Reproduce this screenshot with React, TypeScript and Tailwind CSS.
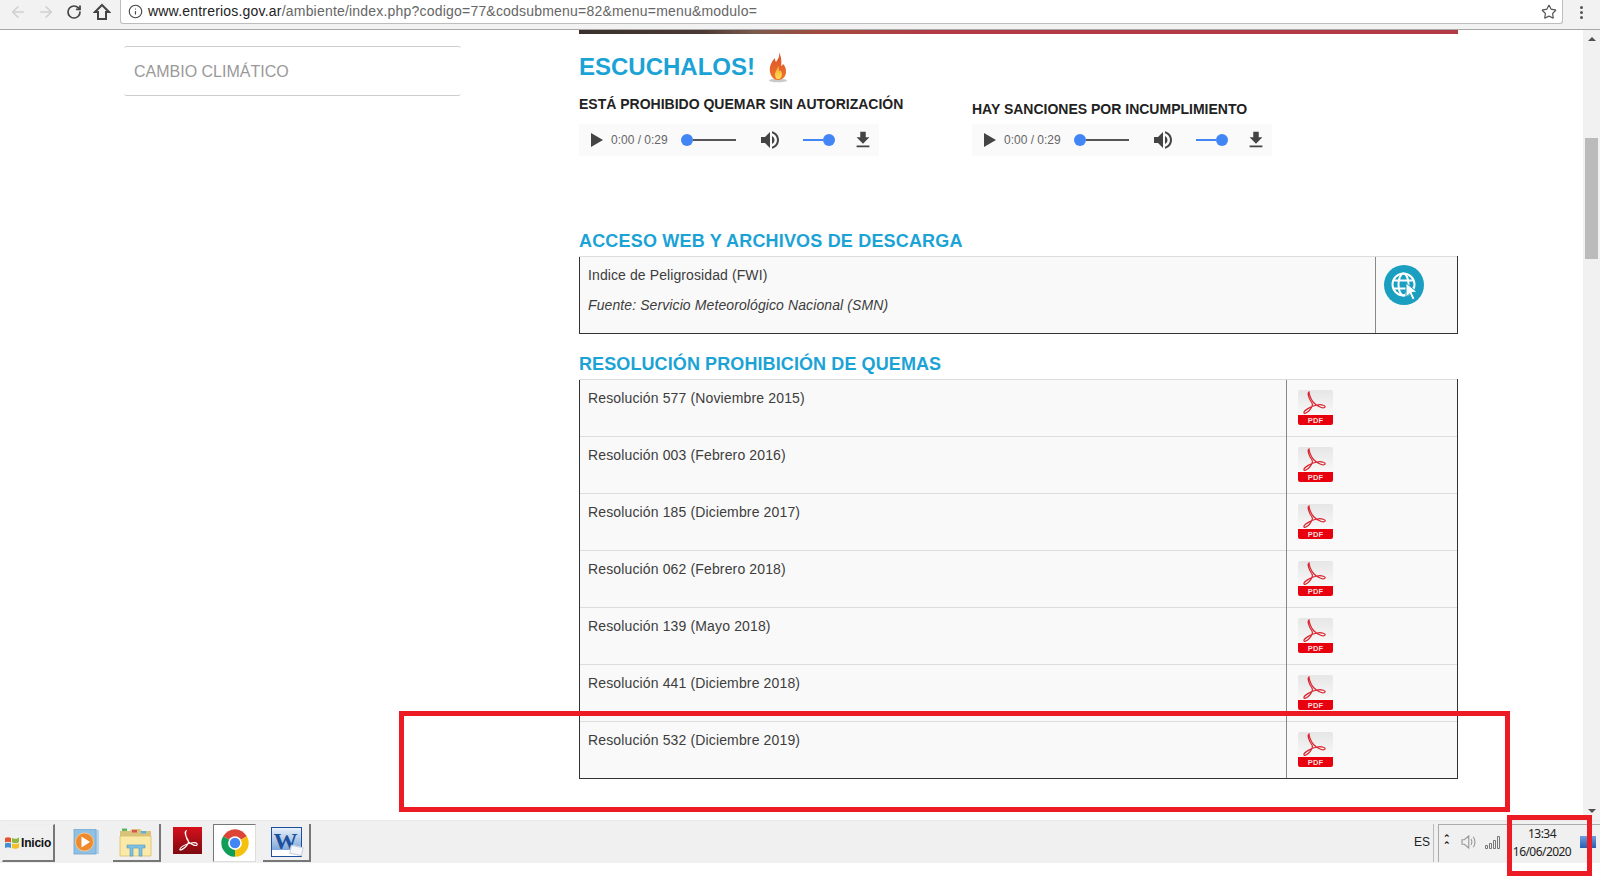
import { ArrowLeft, ArrowRight, RotateCw, Info, Star } from "lucide-react";

const sans = "font-['Liberation_Sans',Arial,sans-serif]";

const resoluciones = [
    "Resolución 577 (Noviembre 2015)",
    "Resolución 003 (Febrero 2016)",
    "Resolución 185 (Diciembre 2017)",
    "Resolución 062 (Febrero 2018)",
    "Resolución 139 (Mayo 2018)",
    "Resolución 441 (Diciembre 2018)",
    "Resolución 532 (Diciembre 2019)",
];

const PdfIcon = () => (
    <svg width="40" height="40" viewBox="0 0 40 40" className="block">
        <defs>
            <linearGradient id="pdfBg" x1="0" y1="0" x2="0" y2="1">
                <stop offset="0" stopColor="#e6e6e6"/>
                <stop offset="1" stopColor="#ffffff"/>
            </linearGradient>
        </defs>
        <rect x="3" y="2" width="35" height="35" rx="2" fill="url(#pdfBg)"/>
        <path d="M14 4c-2 1 0 7 3 11 2 4-6 12-8 10-1-2 7-7 13-8 5-1 9 1 8 2-1 2-7 0-11-4-3-3-5-9-5-11z"
              fill="none" stroke="#d9232e" strokeWidth="1.200"/>
        <path d="M3 27h35v8a2 2 0 0 1-2 2H5a2 2 0 0 1-2-2z" fill="#e8000f"/>
        <text x="20.500" y="34.800" textAnchor="middle" fontSize="7.500" fontWeight="700" fill="#f8dcdc"
              fontFamily="Liberation Sans, Arial, sans-serif">PDF</text>
    </svg>
);

const GlobeIcon = () => (
    <svg width="40" height="40" viewBox="0 0 40 40" className="block">
        <circle cx="20" cy="20" r="20" fill="#1a9fc0"/>
        <g fill="none" stroke="#ffffff" strokeWidth="2">
            <circle cx="19.500" cy="19.500" r="11"/>
            <ellipse cx="19.500" cy="19.500" rx="5" ry="11"/>
            <path d="M9.500 15.500h20M9.500 23.500h20"/>
        </g>
        <path d="M22 18l11 9-5 .6 3 6-2.600 1.200-2.800-6-3.600 3.400z" fill="#ffffff" stroke="#1a9fc0" strokeWidth="1"/>
    </svg>
);

const Flame = () => (
    <svg width="24" height="31" viewBox="0 0 24 31" className="block">
        <defs>
            <linearGradient id="flameOut" x1="0" y1="0" x2="0" y2="1">
                <stop offset="0" stopColor="#d9502a"/>
                <stop offset="1" stopColor="#f0742a"/>
            </linearGradient>
            <linearGradient id="flameIn" x1="0" y1="0" x2="0" y2="1">
                <stop offset="0" stopColor="#f7a428"/>
                <stop offset="1" stopColor="#fde25a"/>
            </linearGradient>
        </defs>
        <ellipse cx="12" cy="28.500" rx="9" ry="1.800" fill="#c9c9c9"/>
        <path d="M13 0c1 5-1 7-3 10-1-1-1-3-1-4-3 3-6 8-5 14 1 5 4 8 8 8s8-3 8-8c0-4-1-6-3-8-1 1-1 2-2 2 1-5 0-10-2-14z"
              fill="url(#flameOut)"/>
        <path d="M12 14c0 3-3 5-3 8 0 3 1 5 3 5s4-2 4-5c0-2-1-3-2-4 0 1-1 1-1 1 0-2 0-4-1-5z" fill="url(#flameIn)"/>
    </svg>
);

const AudioPlayer = () => (
    <div className={`flex h-[32px] w-[300px] items-center bg-[#fafafa] text-[#666] ${sans}`}>
        <svg width="24" height="24" viewBox="0 0 24 24" className="ml-[5px] fill-[#444]">
            <path d="M7 5v14l12-7z"/>
        </svg>
        <span className="ml-[3px] w-[58px] text-[12px] whitespace-nowrap">0:00 / 0:29</span>
        <div className="ml-[12px] flex w-[55px] items-center">
            <span className="h-[12px] w-[12px] rounded-full bg-[#4285f4]"/>
            <span className="h-[2px] flex-1 bg-[#555]"/>
        </div>
        <svg width="24" height="24" viewBox="0 0 24 24" className="ml-[22px] fill-[#444]">
            <path d="M3 9v6h4l5 5V4L7 9H3zm13.500 3c0-1.770-1.020-3.290-2.500-4.030v8.050c1.480-.73 2.500-2.250 2.500-4.020zM14 3.230v2.060c2.890.86 5 3.540 5 6.710s-2.110 5.850-5 6.710v2.060c4.010-.91 7-4.490 7-8.770s-2.990-7.860-7-8.770z"/>
        </svg>
        <div className="ml-[21px] flex w-[32px] items-center">
            <span className="h-[2px] flex-1 bg-[#4285f4]"/>
            <span className="h-[12px] w-[12px] rounded-full bg-[#4285f4]"/>
        </div>
        <svg width="22" height="22" viewBox="0 0 24 24" className="ml-[17px] fill-[#444]">
            <path d="M19 9h-4V3H9v6H5l7 7 7-7zM5 18v2h14v-2H5z"/>
        </svg>
    </div>
);

const ChromeLogo = () => (
    <svg width="30" height="30" viewBox="0 0 24 24">
        <path d="M12 12L2.500 6.500A11 11 0 0 1 21.500 6.500z" fill="#db4437"/>
        <path d="M12 12L21.500 6.500A11 11 0 0 1 12 23z" fill="#f4c20d"/>
        <path d="M12 12L12 23A11 11 0 0 1 2.500 6.500z" fill="#0f9d58"/>
        <circle cx="12" cy="12" r="5.500" fill="#ffffff"/>
        <circle cx="12" cy="12" r="4.200" fill="#4285f4"/>
    </svg>
);

const MediaPlayerLogo = () => (
    <svg width="30" height="28" viewBox="0 0 30 28">
        <rect x="5" y="1" width="21" height="24" fill="#b7d4ea"/>
        <rect x="1" y="0" width="22" height="25" fill="#8fc0e3" stroke="#6fa6cf" strokeWidth="0.8"/>
        <circle cx="11.500" cy="13" r="9" fill="#ee8a2c" stroke="#fbc68a" strokeWidth="1"/>
        <path d="M8.500 7.500v11l8.500-5.500z" fill="#ffffff"/>
    </svg>
);

const FolderLogo = () => (
    <svg width="34" height="34" viewBox="0 0 34 34">
        <path d="M1 6h10l2-2h8l2 2h9v24H1z" fill="#d9c27a"/>
        <rect x="3" y="3.500" width="5" height="2.500" fill="#5cb85c"/>
        <rect x="13" y="5" width="5" height="2.500" fill="#d9534f"/>
        <rect x="22" y="6" width="5" height="2.500" fill="#5bb0de"/>
        <path d="M1 11h31v20H1z" fill="#fbe9a8" stroke="#d8bd6c" strokeWidth="0.8"/>
        <path d="M11 31v-8h-3v-3h18v3h-3v8h-3v-8h-6v8z" fill="#7fc1e4" stroke="#4f94bd" strokeWidth="0.6"/>
    </svg>
);

const AcrobatLogo = () => (
    <svg width="29" height="27" viewBox="0 0 29 27">
        <defs>
            <linearGradient id="acro" x1="0" y1="0" x2="0" y2="1">
                <stop offset="0" stopColor="#d6101c"/>
                <stop offset="1" stopColor="#7e0a10"/>
            </linearGradient>
        </defs>
        <rect width="29" height="27" fill="url(#acro)"/>
        <path d="M13 4c-2 1 0 6 2 9 2 4-5 10-8 10-1-2 5-6 11-7 4-1 7 0 6 2-1 1-6 0-9-4-2-3-3-8-2-10z"
              fill="none" stroke="#ffffff" strokeWidth="1.100"/>
    </svg>
);

const WordLogo = () => (
    <div className="relative h-[30px] w-[31px] border border-[#1c4f9c] bg-white">
        <div className="absolute inset-x-0 top-0 h-[22px] bg-[linear-gradient(180deg,#e8f0fa,#7ea7d8)]"/>
        <span className="absolute left-[2px] top-[1px] font-['Liberation_Serif',serif] text-[24px] leading-[24px] font-bold text-[#1c4f9c]">W</span>
        <span className="absolute right-[-2px] bottom-[1px] h-[9px] w-[13px] rotate-12 bg-[#f4f6fa] border border-[#c5cfdd]"/>
    </div>
);

const WinFlag = () => (
    <svg width="16" height="15" viewBox="0 0 16 15" className="shrink-0">
        <path d="M1 3c2-1 4-1 6 0v4.500c-2-1-4-1-6 0z" fill="#e2552b"/>
        <path d="M8 3c2 1 5 1 7-.6v4.600c-2 1.500-5 1.500-7 .5z" fill="#8bb93f"/>
        <path d="M1 8.500c2-1 4-1 6 0V13c-2-1-4-1-6 0z" fill="#3f8fd2"/>
        <path d="M8 8.500c2 1 5 1 7-.5v4.600c-2 1.500-5 1.500-7 .5z" fill="#f6bf26"/>
    </svg>
);

const App = () => {
    return (
        <div className={`relative h-[880px] w-[1624px] overflow-hidden bg-white ${sans}`}>
            <div className="flex h-full w-[1600px] flex-col">
                {/* chrome toolbar */}
                <div className="flex h-[30px] shrink-0 items-start border-b border-[#a8a8a8] bg-[#f2f2f2]">
                    <div className="flex h-[24px] w-[120px] items-center pl-[9px]">
                        <ArrowLeft size={18} strokeWidth={2} className="text-[#cfcfcf]"/>
                        <ArrowRight size={18} strokeWidth={2} className="ml-[10px] text-[#cfcfcf]"/>
                        <RotateCw size={16} strokeWidth={2.6} className="ml-[11px] text-[#444]"/>
                        <svg width="18" height="18" viewBox="0 0 18 18" className="ml-[11px] fill-none stroke-[#444] stroke-[2]">
                            <path d="M9 2L2 9h3v7h8V9h3z"/>
                        </svg>
                    </div>
                    <div className="flex h-[24px] w-[1443px] items-center rounded-b-[3px] border-x border-b border-[#bdbdbd] bg-white pl-[7px] pr-[5px]">
                        <Info size={15} strokeWidth={1.8} className="text-[#444]"/>
                        <span className="ml-[5px] text-[14px] tracking-[0.2px] whitespace-nowrap text-[#666]">
                            <span className="text-[#222]">www.entrerios.gov.ar</span>/ambiente/index.php?codigo=77&amp;codsubmenu=82&amp;menu=menu&amp;modulo=
                        </span>
                        <Star size={16} strokeWidth={1.8} className="ml-auto text-[#555]"/>
                    </div>
                    <div className="flex h-[24px] flex-1 flex-col items-center justify-center gap-[2px] pr-[1px]">
                        <span className="h-[3px] w-[3px] rounded-full bg-[#555]"/>
                        <span className="h-[3px] w-[3px] rounded-full bg-[#555]"/>
                        <span className="h-[3px] w-[3px] rounded-full bg-[#555]"/>
                    </div>
                </div>

                <div className="flex h-[790px] shrink-0">
                    {/* page */}
                    <div className="flex flex-1 overflow-hidden pl-[124px]">
                        <div className="w-[337px] shrink-0 pt-[16px]">
                            <div className="flex h-[50px] items-center rounded-[3px] border-y border-[#cccccc] pt-[2px] pl-[10px] text-[16px] text-[#999]">
                                CAMBIO CLIMÁTICO
                            </div>
                        </div>

                        <div className="ml-[118px] w-[879px] shrink-0 text-[14px] text-[#3d3d3d]">
                            <div className="h-[4px] bg-[linear-gradient(90deg,#3b302b_0%,#4a3a33_14%,#7a5a4c_20%,#a4493f_28%,#b23a47_40%,#b23a47_100%)]"/>
                            <div className="mt-[16px] flex h-[32px] items-center pt-[2px] text-[24px] font-bold text-[#1ba3d6]">
                                ESCUCHALOS!
                                <span className="ml-[11px]"><Flame/></span>
                            </div>
                            <div className="flex">
                                <div className="w-[393px] pt-[12px]">
                                    <div className="mb-[10px] h-[20px] text-[14px] leading-[20px] font-bold text-[#222]">ESTÁ PROHIBIDO QUEMAR SIN AUTORIZACIÓN</div>
                                    <AudioPlayer/>
                                </div>
                                <div className="pt-[17px]">
                                    <div className="mb-[5px] h-[20px] text-[14px] leading-[20px] font-bold text-[#222]">HAY SANCIONES POR INCUMPLIMIENTO</div>
                                    <AudioPlayer/>
                                </div>
                            </div>

                            <div className="mt-[75px] mb-[5px] h-[20px] text-[18px] leading-[20px] font-bold tracking-[0.18px] text-[#1ba3d6]">ACCESO WEB Y ARCHIVOS DE DESCARGA</div>
                            <table className="w-full border-collapse bg-[#f9f9f9] tracking-[0.1px]">
                                <tbody>
                                <tr className="h-[77px]">
                                    <td className="border-t border-b border-l border-t-[#dddddd] border-b-[#333] border-l-[#333] p-2 align-top">
                                        <p className="mb-[10px] leading-[20px]">Indice de Peligrosidad (FWI)</p>
                                        <p className="mb-[10px] leading-[20px] italic">Fuente: Servicio Meteorológico Nacional (SMN)</p>
                                    </td>
                                    <td className="w-[82px] border border-t-[#dddddd] border-b-[#333] border-r-[#333] border-l-[#888] p-2 align-top">
                                        <GlobeIcon/>
                                    </td>
                                </tr>
                                </tbody>
                            </table>

                            <div className="mt-[20px] mb-[5px] h-[20px] text-[18px] leading-[20px] font-bold tracking-[0.1px] text-[#1ba3d6]">RESOLUCIÓN PROHIBICIÓN DE QUEMAS</div>
                            <table className="w-full border-collapse bg-[#f9f9f9] tracking-[0.14px]">
                                <tbody>
                                {resoluciones.map((r, i) => (
                                    <tr key={r} className="h-[57px]">
                                        <td className={`border-t border-l border-t-[#dddddd] border-l-[#333] p-2 align-top leading-[20px] ${i === resoluciones.length - 1 ? "border-b border-b-[#333]" : ""}`}>{r}</td>
                                        <td className={`w-[171px] border-t border-r border-l border-t-[#dddddd] border-r-[#333] border-l-[#888] p-2 align-top ${i === resoluciones.length - 1 ? "border-b border-b-[#333]" : ""}`}>
                                            <PdfIcon/>
                                        </td>
                                    </tr>
                                ))}
                                </tbody>
                            </table>
                        </div>
                    </div>

                    {/* scrollbar */}
                    <div className="flex w-[17px] shrink-0 flex-col items-center justify-between bg-[#f1f1f1] py-[7px]">
                        <div className="h-0 w-0 border-x-[4px] border-b-[4px] border-x-transparent border-b-[#505050]"/>
                        <div className="h-0 w-0 border-x-[4px] border-t-[4px] border-x-transparent border-t-[#505050]"/>
                    </div>
                </div>

                {/* windows taskbar */}
                <div className="flex h-[43px] shrink-0 items-end border-t border-[#e8e8e8] bg-[#f0f0f0] pb-[1px] pl-[2px] text-[#111]">
                    <div className="flex h-[38px] w-[53px] items-center gap-[1px] border border-b-2 border-r-2 border-t-[#eeeeee] border-l-[#eeeeee] border-b-[#777] border-r-[#777] pl-[1px] text-[12px] font-bold tracking-[-0.2px]">
                        <WinFlag/>
                        <span>Inicio</span>
                    </div>
                    <div className="ml-[18px] flex h-[38px] w-[40px] items-center justify-start"><MediaPlayerLogo/></div>
                    <div className="flex h-[38px] w-[48px] items-center justify-center border-r-2 border-b-2 border-r-[#777] border-b-[#777]"><FolderLogo/></div>
                    <div className="ml-[12px] flex h-[38px] w-[40px] items-center pb-[6px]"><AcrobatLogo/></div>
                    <div className="flex h-[38px] w-[43px] items-center justify-center border border-[#777] border-r-[#ddd] border-b-[#ddd] bg-white"><ChromeLogo/></div>
                    <div className="ml-[7px] flex h-[38px] w-[48px] items-center justify-center border-r-2 border-b-2 border-r-[#777] border-b-[#777]"><WordLogo/></div>

                    <div className="ml-auto flex h-[38px] items-center border-r border-[#bbb] pr-[3px] pb-[3px] pl-[3px] text-[12px] text-[#222]">ES</div>
                    <div className="ml-[4px] flex h-[38px] w-[162px] items-center border-t border-l border-[#aaa] pb-[4px]">
                        <span className="ml-[4px] text-[9px] leading-[7px] font-bold">⌃<br/>⌃</span>
                        <svg width="18" height="18" viewBox="0 0 24 24" className="ml-[8px] fill-none stroke-[#999] stroke-[1.5]">
                            <path d="M4 9v6h3l6 5V4L7 9zM16 8c1.500 2 1.500 6 0 8M19 5c3 4 3 10 0 14"/>
                        </svg>
                        <svg width="18" height="14" viewBox="0 0 18 14" className="ml-[7px] fill-none stroke-[#777]">
                            <path d="M1.500 13.500v-3h2v3zM5.500 13.500v-5h2v5zM9.500 13.500v-8h2v8zM13.500 13.500v-12h2v12z"/>
                        </svg>
                        <div className="ml-[5px] flex w-[70px] flex-col items-center pt-[2px] text-[12px] leading-[18px] font-['Noto_Sans',sans-serif] tracking-[-0.55px] text-[#222]">
                            <span>13:34</span>
                            <span>16/06/2020</span>
                        </div>
                        <div className="ml-[3px] h-[12px] w-[16px] bg-[linear-gradient(180deg,#6f9fe0,#2a5db0)]"/>
                    </div>
                </div>
            </div>

            {/* scrollbar thumb, over the track */}
            <div className="absolute top-[138px] left-[1585px] h-[121px] w-[13px] bg-[#bbbbbb]"/>

            {/* red marks drawn over the capture */}
            <div className="absolute top-[711px] left-[399px] h-[101px] w-[1111px] border-[5px] border-[#ed1c24]"/>
            <div className="absolute top-[815px] left-[1507px] h-[61px] w-[85px] border-[5px] border-[#ed1c24]"/>
        </div>
    )
}

export default App
